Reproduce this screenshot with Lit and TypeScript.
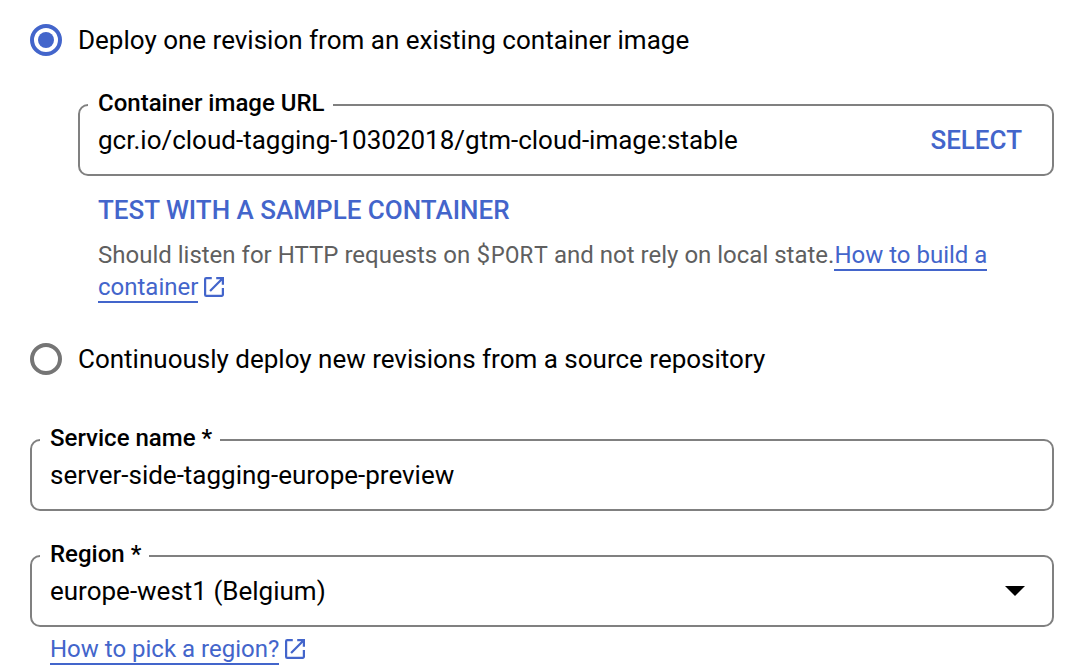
import { LitElement, html, css } from "lit";
import { customElement, state } from "lit/decorators.js";

const externalIcon = html`<svg class="external" viewBox="3 3 18 18" aria-hidden="true">
  <path fill="currentColor" d="M19 19H5V5h5V3H5a2 2 0 0 0-2 2v14a2 2 0 0 0 2 2h14c1.100 0 2-.9 2-2v-6h-2v6zM14 3v2h3.590l-9.830 9.830 1.410 1.410L19 6.410V10h2V3h-7z" />
</svg>`;

@customElement("app-root")
export class AppRoot extends LitElement {
  @state() private source = "image";

  static styles = css`
    :host {
      display: block;
      font-family: Roboto, sans-serif;
      font-size: 26px;
      line-height: 32px;
      color: #000;
      background: #fff;
    }
    * {
      box-sizing: border-box;
    }
    .form {
      padding: 24px 32px 0 30px;
    }
    .option {
      display: flex;
      align-items: center;
      gap: 16px;
    }
    .radio {
      appearance: none;
      flex: none;
      display: grid;
      place-items: center;
      width: 32px;
      height: 32px;
      margin: 0;
      border: 4px solid #757575;
      border-radius: 50%;
    }
    .radio:checked {
      border-color: #4365cb;
    }
    .radio:checked::before {
      content: "";
      width: 16px;
      height: 16px;
      border-radius: 50%;
      background: #4365cb;
    }
    .details {
      padding: 35px 0 40px 48px;
    }
    .field {
      min-width: 0;
      margin: 0;
      padding: 0 0 13px;
      border: 2px solid #808080;
      border-radius: 10px;
    }
    .legend {
      margin-left: 8px;
      padding: 0 8px 4px 10px;
      font-size: 24px;
      font-weight: 500;
      line-height: 24px;
    }
    .row {
      display: flex;
      align-items: center;
      height: 42px;
      padding: 0 18px;
    }
    .input {
      flex: 1;
      min-width: 0;
      height: 42px;
      padding: 0;
      border: 0;
      outline: 0;
      appearance: none;
      background: none;
      font: inherit;
      color: inherit;
    }
    .arrow {
      flex: none;
      width: 20px;
      height: 10px;
      margin: 0 9px 0 -20px;
      pointer-events: none;
    }
    .button {
      display: block;
      padding: 0;
      border: 0;
      background: none;
      font: inherit;
      font-weight: 500;
      color: #4365cb;
    }
    .select {
      margin-right: 12px;
    }
    .below {
      padding: 18px 20px 0;
    }
    .help {
      margin: 0;
      padding-top: 13px;
      font-size: 24px;
      color: #5f5f5f;
    }
    .code {
      font-family: "Roboto Mono", "DejaVu Sans Mono", monospace;
      font-size: 24px;
      line-height: 24px;
    }
    .link {
      color: #4365cb;
      text-decoration: none;
      border-bottom: 2px solid #4365cb;
    }
    .external {
      width: 20px;
      height: 20px;
      margin-left: 6px;
      color: #4365cb;
      vertical-align: -2px;
    }
    .fields {
      display: grid;
      gap: 31px;
      padding-top: 51px;
    }
    .region-help {
      padding: 6px 20px 0;
      font-size: 24px;
    }
  `;

  render() {
    return html`<form class="form">
      <label class="option">
        <input class="radio" type="radio" name="source" value="image"
          .checked=${this.source === "image"} @change=${() => (this.source = "image")} />
        Deploy one revision from an existing container image
      </label>
      <div class="details">
        <fieldset class="field">
          <legend class="legend"><label for="url">Container image URL</label></legend>
          <div class="row">
            <input class="input" id="url" type="text" value="gcr.io/cloud-tagging-10302018/gtm-cloud-image:stable" />
            <button class="button select" type="button">SELECT</button>
          </div>
        </fieldset>
        <div class="below">
          <button class="button" type="button">TEST WITH A SAMPLE CONTAINER</button>
          <p class="help">Should listen for HTTP requests on <code class="code">$PORT</code> and not rely on local state.<a class="link" href="#build">How to build a container</a>${externalIcon}</p>
        </div>
      </div>
      <label class="option">
        <input class="radio" type="radio" name="source" value="repository"
          .checked=${this.source === "repository"} @change=${() => (this.source = "repository")} />
        Continuously deploy new revisions from a source repository
      </label>
      <div class="fields">
        <fieldset class="field">
          <legend class="legend"><label for="name">Service name *</label></legend>
          <div class="row">
            <input class="input" id="name" type="text" value="server-side-tagging-europe-preview" />
          </div>
        </fieldset>
        <fieldset class="field">
          <legend class="legend"><label for="region">Region *</label></legend>
          <div class="row">
            <select class="input" id="region">
              <option>europe-west1 (Belgium)</option>
            </select>
            <svg class="arrow" viewBox="0 0 20 10" aria-hidden="true"><path d="M0 0h20L10 10z" /></svg>
          </div>
        </fieldset>
      </div>
      <div class="region-help"><a class="link" href="#region">How to pick a region?</a>${externalIcon}</div>
    </form>`;
  }
}
